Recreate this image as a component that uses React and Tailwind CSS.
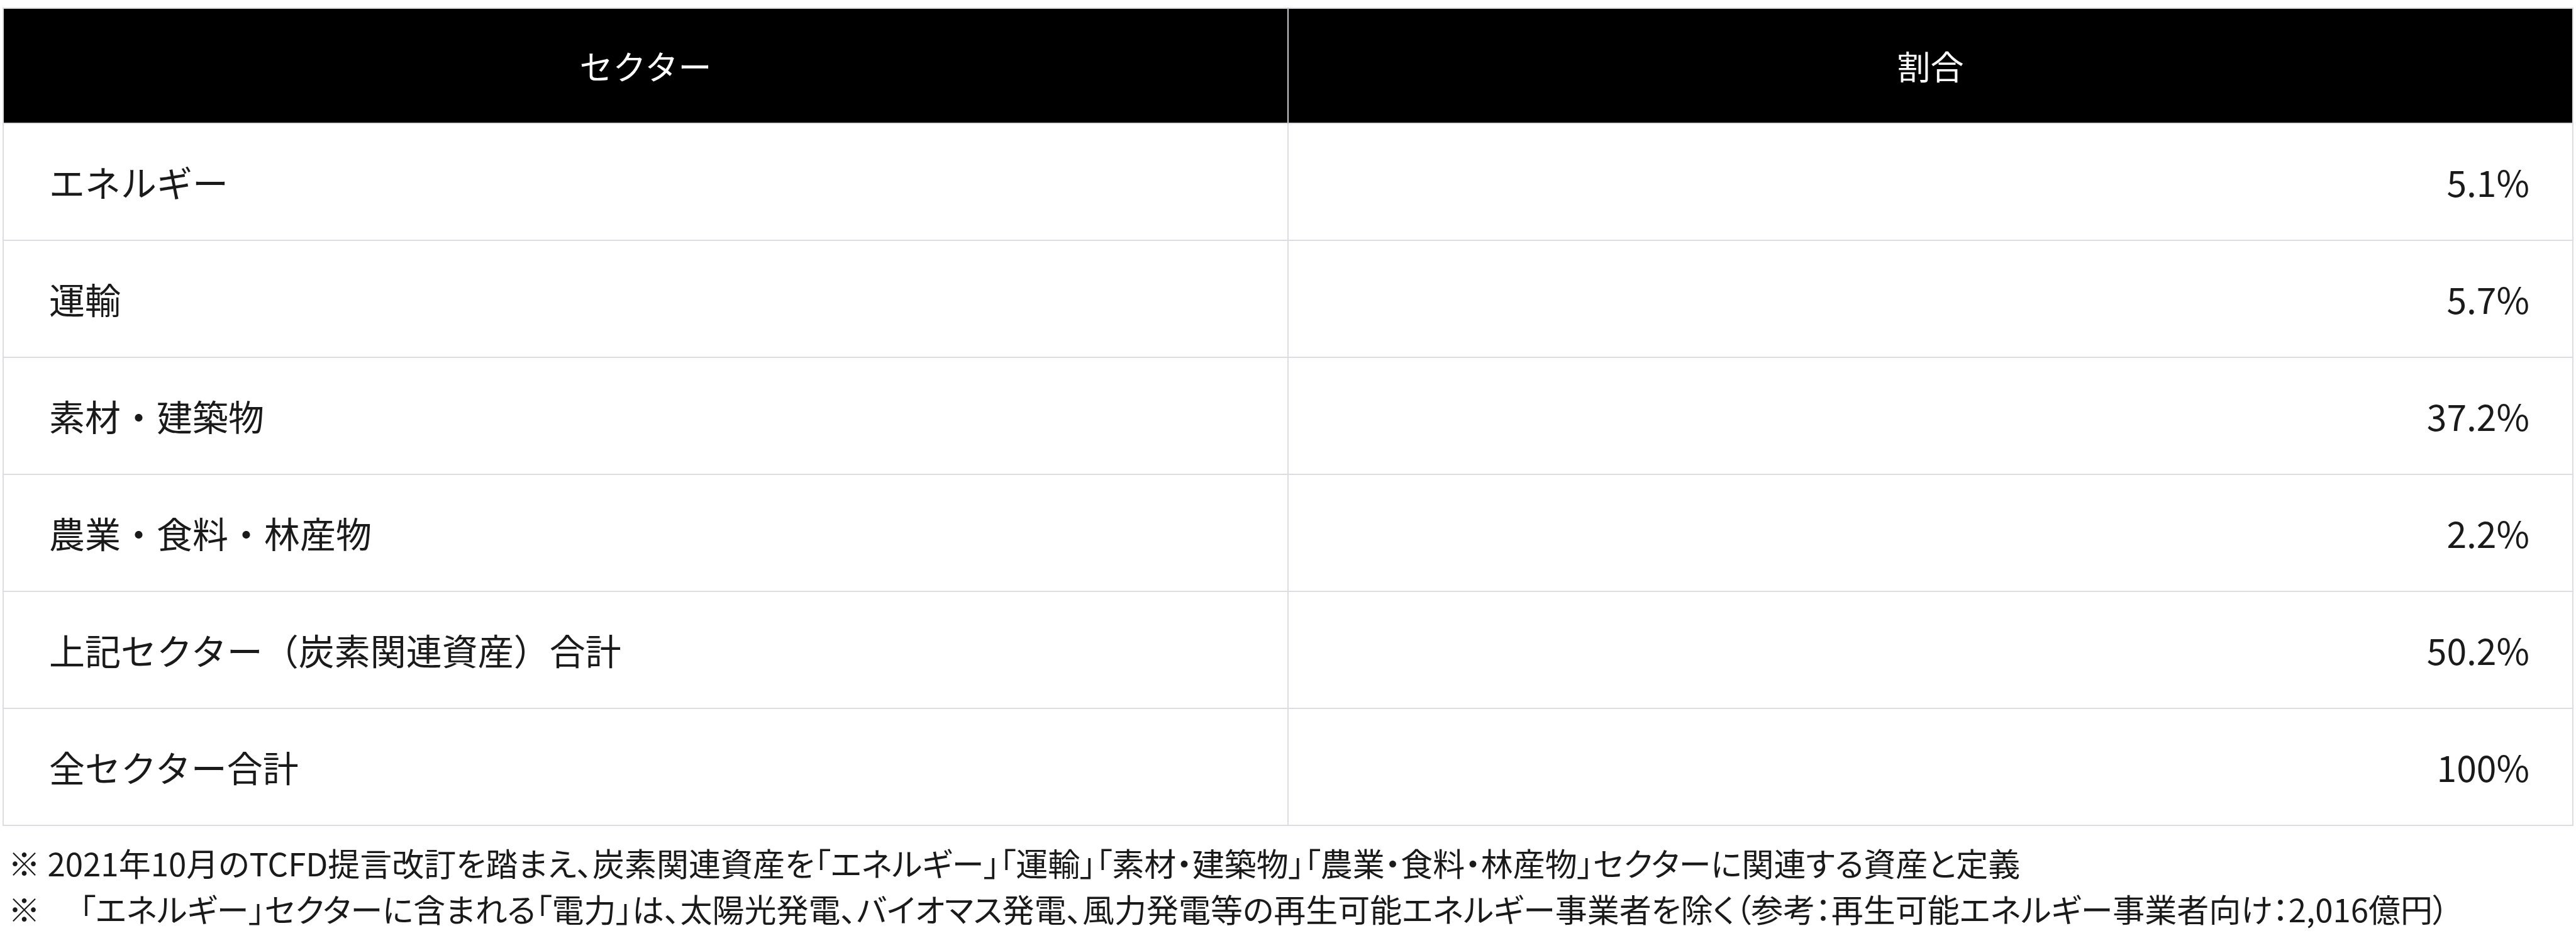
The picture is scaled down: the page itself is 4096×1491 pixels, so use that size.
import React from "react";

const rows = [
  { sector: "エネルギー", ratio: "5.1%" },
  { sector: "運輸", ratio: "5.7%" },
  { sector: "素材・建築物", ratio: "37.2%" },
  { sector: "農業・食料・林産物", ratio: "2.2%" },
  { sector: "上記セクター（炭素関連資産）合計", ratio: "50.2%" },
  { sector: "全セクター合計", ratio: "100%" },
];

const App = () => {
  return (
    <div className="bg-white w-[4096px] h-[1491px] pt-[12px] px-[4px] text-[#1a1a1a] font-['Noto_Sans_CJK_JP','Noto_Sans',sans-serif]">
      {/* Table */}
      <table className="w-full table-fixed border-collapse border-2 border-[#dcdde1]">
        <thead>
          <tr className="bg-black text-white h-[183px]">
            <th className="w-1/2 font-normal text-[53px] border-r-2 border-[#c9cace]">セクター</th>
            <th className="w-1/2 font-normal text-[53px]">割合</th>
          </tr>
        </thead>
        <tbody>
          {rows.map((row) => (
            <tr key={row.sector} className="h-[186px] border-t-2 border-[#dcdde1]">
              <td className="pl-[72px] text-[57px] border-r-2 border-[#dcdde1]">{row.sector}</td>
              <td className="pr-[68px] text-right text-[57px]">{row.ratio}</td>
            </tr>
          ))}
        </tbody>
      </table>

      {/* Notes */}
      <div className="pt-[22px] pl-[9px] text-[51px] leading-[73px] [font-feature-settings:'palt']">
        <p>※ 2021年10月のTCFD提言改訂を踏まえ、炭素関連資産を「エネルギー」「運輸」「素材・建築物」「農業・食料・林産物」セクターに関連する資産と定義</p>
        <p>※ 　「エネルギー」セクターに含まれる「電力」は、太陽光発電、バイオマス発電、風力発電等の再生可能エネルギー事業者を除く（参考：再生可能エネルギー事業者向け：2,016億円）</p>
      </div>
    </div>
  );
};

export default App;
